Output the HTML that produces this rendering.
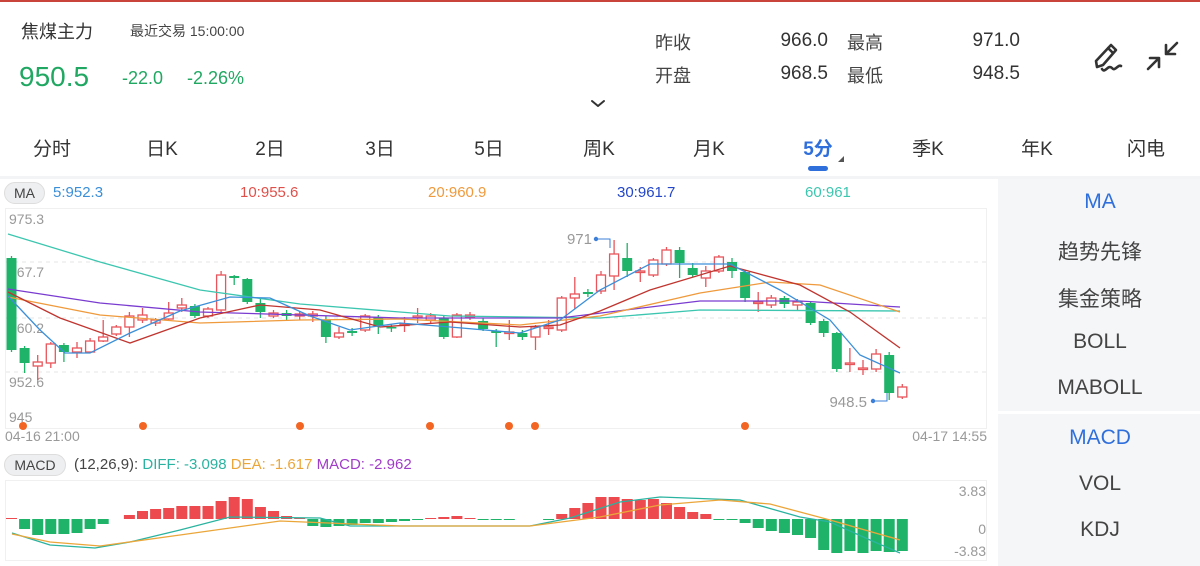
<!DOCTYPE html>
<html><head><meta charset="utf-8">
<style>
*{margin:0;padding:0;box-sizing:border-box}
body{width:1200px;height:566px;background:#fff;position:relative;overflow:hidden;font-family:"Liberation Sans","Noto Sans CJK SC",sans-serif;color:#333}
.a{position:absolute;white-space:nowrap}
.tab{position:absolute;top:134px;font-size:19px;color:#333;transform:translateX(-50%)}
.rp{position:absolute;left:1100px;transform:translateX(-50%);font-size:21px;color:#444}
</style></head><body>
<div class="a" style="left:0;top:0;width:1200px;height:2px;background:#c9453c"></div>
<div class="a" style="left:21px;top:18px;font-size:18px;color:#333">焦煤主力</div>
<div class="a" style="left:130px;top:21px;font-size:14px;color:#444">最近交易 15:00:00</div>
<div class="a" style="left:19px;top:61px;font-size:28px;color:#20a862">950.5</div>
<div class="a" style="left:122px;top:68px;font-size:18px;color:#20a862">-22.0</div>
<div class="a" style="left:187px;top:68px;font-size:18px;color:#20a862">-2.26%</div>
<div class="a" style="left:655px;top:29px;font-size:18px;color:#444">昨收</div>
<div class="a" style="left:655px;top:62px;font-size:18px;color:#444">开盘</div>
<div class="a" style="left:847px;top:29px;font-size:18px;color:#444">最高</div>
<div class="a" style="left:847px;top:62px;font-size:18px;color:#444">最低</div>
<div class="a" style="right:372px;top:30px;font-size:19px;color:#333">966.0</div>
<div class="a" style="right:372px;top:63px;font-size:19px;color:#333">968.5</div>
<div class="a" style="right:180px;top:30px;font-size:19px;color:#333">971.0</div>
<div class="a" style="right:180px;top:63px;font-size:19px;color:#333">948.5</div>
<svg class="a" style="left:0;top:0" width="1200" height="180">
<g fill="none" stroke="#333" stroke-width="2.6" stroke-linecap="round" stroke-linejoin="round">
<path d="M1111 45 L1116 50 L1103 65 L1097 67 L1096 61 Z M1108 48 L1113 53"/>
<path d="M1102 69 C1105 74 1108 64 1112 68 C1115 72 1118 64 1121 66"/>
<path d="M1177 43 L1167 53 M1166 45 L1166 54 L1175 54"/>
<path d="M1148 69 L1158 59 M1159 67 L1159 58 L1150 58"/>
<path d="M592 101 L598 106 L604 101" stroke-width="2"/>
</g>
<rect x="808" y="166" width="20" height="5" rx="2.5" fill="#2f6fdc"/>
<path d="M838 162 L844 156 L844 162 Z" fill="#555"/>
<rect x="0" y="176" width="1200" height="3" fill="#f3f4f6"/>
</svg>
<div class="tab" style="left:52px">分时</div>
<div class="tab" style="left:162px">日K</div>
<div class="tab" style="left:270px">2日</div>
<div class="tab" style="left:380px">3日</div>
<div class="tab" style="left:489px">5日</div>
<div class="tab" style="left:599px">周K</div>
<div class="tab" style="left:709px">月K</div>
<div class="tab" style="left:818px;color:#2f6fdc;font-weight:bold">5分</div>
<div class="tab" style="left:928px">季K</div>
<div class="tab" style="left:1037px">年K</div>
<div class="tab" style="left:1146px">闪电</div>

<div class="a" style="left:998px;top:179px;width:202px;height:387px;background:#f5f6f8"></div>
<div class="a" style="left:998px;top:411px;width:202px;height:3px;background:#fff"></div>
<div class="rp" style="top:190px;color:#2f6fdc">MA</div>
<div class="rp" style="top:236px">趋势先锋</div>
<div class="rp" style="top:283px">集金策略</div>
<div class="rp" style="top:330px">BOLL</div>
<div class="rp" style="top:376px">MABOLL</div>
<div class="rp" style="top:426px;color:#2f6fdc">MACD</div>
<div class="rp" style="top:472px">VOL</div>
<div class="rp" style="top:518px">KDJ</div>

<div class="a" style="left:4px;top:182px;width:41px;height:22px;background:#eeeff1;border:1px solid #ddd;border-radius:11px;font-size:14px;color:#444;text-align:center;line-height:20px">MA</div>
<div class="a" style="left:53px;top:184px;font-size:15px;color:#3b8fd9">5:952.3</div>
<div class="a" style="left:240px;top:184px;font-size:15px;color:#e0504a">10:955.6</div>
<div class="a" style="left:428px;top:184px;font-size:15px;color:#ef9a3c">20:960.9</div>
<div class="a" style="left:617px;top:184px;font-size:15px;color:#2346c8">30:961.7</div>
<div class="a" style="left:805px;top:184px;font-size:15px;color:#3cc6b0">60:961</div>

<div class="a" style="left:4px;top:454px;width:62px;height:22px;background:#eeeff1;border:1px solid #ddd;border-radius:11px;font-size:14px;color:#444;text-align:center;line-height:20px">MACD</div>
<div class="a" style="left:74px;top:456px;font-size:15px;color:#444">(12,26,9): <span style="color:#2ab3a0">DIFF: -3.098</span> <span style="color:#eba63a">DEA: -1.617</span> <span style="color:#a03cc8">MACD: -2.962</span></div>

<svg class="a" id="ch" style="left:0;top:0" width="1000" height="566" font-family="Liberation Sans, sans-serif">
<rect x="5.5" y="208.5" width="981" height="220" fill="none" stroke="#f0f0f0"/>
<g stroke="#e6e6e6" stroke-dasharray="4 4"><line x1="6" y1="262" x2="986" y2="262"/><line x1="6" y1="318" x2="986" y2="318"/><line x1="6" y1="372" x2="986" y2="372"/></g>
<rect x="5.5" y="480.5" width="981" height="80" fill="none" stroke="#f0f0f0"/>
<g font-size="14" fill="#999">
<text x="9" y="224">975.3</text><text x="9" y="277">967.7</text><text x="9" y="333">960.2</text><text x="9" y="387">952.6</text><text x="9" y="422">945</text>
<text x="5" y="441">04-16 21:00</text><text x="987" y="441" text-anchor="end">04-17 14:55</text>
<text x="986" y="496" text-anchor="end">3.83</text><text x="986" y="534" text-anchor="end">0</text><text x="986" y="556" text-anchor="end">-3.83</text>
<text x="592" y="244" text-anchor="end" font-size="15">971</text><text x="867" y="407" text-anchor="end" font-size="15">948.5</text>
</g>
<path d="M596 239 H610 V248 M873 401 H887 V393" fill="none" stroke="#3b7fd9"/>
<circle cx="596" cy="239" r="2.2" fill="#3b7fd9"/><circle cx="873" cy="401" r="2.2" fill="#3b7fd9"/>
<g fill="#f26522"><circle cx="23" cy="426" r="4"/><circle cx="143" cy="426" r="4"/><circle cx="300" cy="426" r="4"/><circle cx="430" cy="426" r="4"/><circle cx="509" cy="426" r="4"/><circle cx="535" cy="426" r="4"/><circle cx="745" cy="426" r="4"/></g>
<g id="cd"></g>
<g fill="none" stroke-width="1.3">
<polyline stroke="#3cc6b0" points="8,234 100,262 200,290 300,304 450,316 600,318 700,310 900,311"/>
<polyline stroke="#7a3cd0" points="8,289 100,303 200,312 400,318 560,318 700,301 800,301 900,307"/>
<polyline stroke="#ef9a3c" points="8,297 100,315 200,323 300,320 400,319 520,325 600,316 700,293 770,282 820,285 900,312"/>
<polyline stroke="#c0352f" points="8,292 60,318 130,343 200,318 260,305 320,310 380,327 450,322 520,327 560,325 600,311 650,290 730,266 800,285 850,312 900,348"/>
<polyline stroke="#3b8fd9" points="8,296 40,330 65,353 90,353 130,333 180,311 230,297 270,298 310,316 350,330 400,323 450,327 520,333 560,320 600,290 650,264 730,264 780,290 830,320 860,355 900,373"/>
</g>
<g id="md"></g>
<g fill="none" stroke-width="1.3">
<polyline stroke="#2ab3a0" points="12,533 50,545 95,548 130,542 180,530 230,517 320,518 350,526 530,526 570,518 620,502 660,497 740,500 800,517 830,522 870,540 900,553"/>
<polyline stroke="#eba63a" points="12,534 50,542 100,546 180,535 280,521 400,526 530,526 600,517 660,505 720,500 770,504 830,520 900,540"/>
</g>
</svg>
<script>
var C=[[0,'G',258,350,256,352],[1,'G',348,363,346,373],[2,'R',362,366,355,380],[3,'R',344,363,342,368],[4,'G',345,352,343,362],[5,'R',348,352,342,358],[6,'R',341,352,338,352],[7,'R',337,341,320,342],[8,'R',327,334,325,336],[9,'R',316,327,312,337],[10,'R',315,320,308,323],[11,'R',320,323,318,326],[12,'R',313,319,302,321],[13,'R',305,308,298,312],[14,'G',306,316,304,318],[15,'R',309,316,307,318],[16,'R',275,310,271,312],[17,'G',276,278,275,285],[18,'G',279,302,278,304],[19,'G',303,312,299,318],[20,'R',313,316,310,318],[21,'G',313,316,310,320],[22,'R',314,316,311,320],[23,'R',314,316,311,322],[24,'G',320,337,316,343],[25,'R',333,337,327,339],[26,'G',331,333,328,336],[27,'R',316,330,314,332],[28,'G',317,326,315,334],[29,'G',327,328,324,332],[30,'R',324,325,317,332],[31,'R',316,317,308,323],[32,'R',316,320,313,323],[33,'G',318,337,315,339],[34,'R',315,337,313,338],[35,'R',315,317,312,320],[36,'G',321,329,318,331],[37,'G',331,333,329,347],[38,'R',332,333,320,340],[39,'G',333,337,330,340],[40,'R',327,337,325,350],[41,'R',327,328,320,335],[42,'R',298,330,296,332],[43,'R',294,298,277,309],[44,'G',292,294,289,297],[45,'R',275,291,271,294],[46,'R',254,276,240,290],[47,'G',258,271,243,277],[48,'R',271,272,267,282],[49,'R',260,275,258,277],[50,'R',250,264,247,266],[51,'G',250,263,247,278],[52,'G',268,275,263,277],[53,'R',271,278,266,287],[54,'R',257,271,255,273],[55,'G',262,271,258,278],[56,'G',272,298,270,302],[57,'R',302,303,292,312],[58,'R',298,305,295,308],[59,'G',298,304,296,308],[60,'R',302,305,299,311],[61,'G',303,323,302,325],[62,'G',321,333,319,337],[63,'G',333,369,332,372],[64,'R',363,364,348,372],[65,'R',368,369,360,375],[66,'R',354,369,349,372],[67,'G',355,393,352,400],[68,'R',387,397,384,399]];
var s='';C.forEach(function(c){var x=11.5+c[0]*13.1;var col=c[1]=='R'?'#e8555a':'#1fb36a';
s+='<line x1="'+x+'" x2="'+x+'" y1="'+c[4]+'" y2="'+c[5]+'" stroke="'+col+'" stroke-width="1.3"/>';
var h=Math.max(1.5,c[3]-c[2]);
if(c[1]=='R')s+='<rect x="'+(x-4.5)+'" y="'+c[2]+'" width="9" height="'+h+'" fill="#fff" stroke="'+col+'" stroke-width="1.3"/>';
else s+='<rect x="'+(x-5)+'" y="'+c[2]+'" width="10" height="'+h+'" fill="'+col+'"/>';});
document.getElementById('cd').innerHTML=s;
var M=[1,-10,-16,-15,-15,-14,-10,-5,0,4,8,10,11,13,13,13,18,22,20,12,8,3,1,-7,-8,-7,-6,-4,-4,-3,-2,-1,1,2,3,1,-1,-1,-1,0,0,-1,5,11,16,22,22,20,19,20,16,12,7,5,-1,-1,-4,-9,-12,-14,-16,-19,-31,-34,-32,-34,-32,-33,-32];
var m='';M.forEach(function(v,i){var x=11.5+i*13.1;if(v==0)return;var col=v>0?'#ec4a4e':'#1fb36a';
var y=v>0?519-v:519;m+='<rect x="'+(x-5.5)+'" y="'+y+'" width="11" height="'+Math.abs(v)+'" fill="'+col+'"/>';});
document.getElementById('md').innerHTML=m;
</script>
</body></html>
